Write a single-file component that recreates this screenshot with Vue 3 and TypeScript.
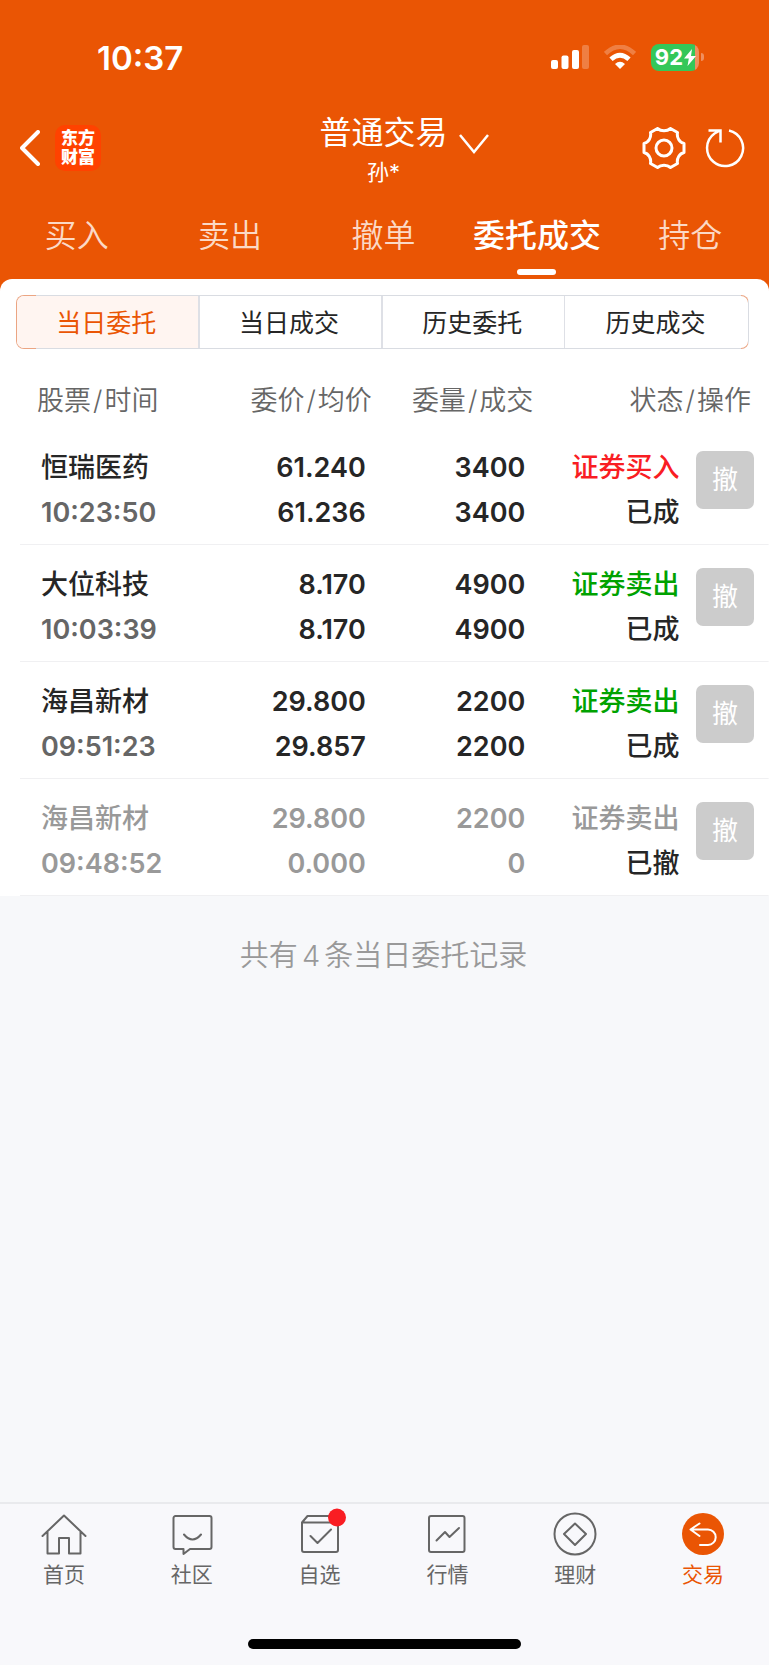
<script setup lang="ts">
import { ref } from 'vue'

interface Order {
  name: string
  time: string
  price: string
  average: string
  amount: string
  filled: string
  side: string
  tone: 'buy' | 'sell' | 'void'
  state: string
}

const tabs = ['买入', '卖出', '撤单', '委托成交', '持仓']
const activeTab = ref(3)

const segments = ['当日委托', '当日成交', '历史委托', '历史成交']
const activeSegment = ref(0)

const orders: Order[] = [
  { name: '恒瑞医药', time: '10:23:50', price: '61.240', average: '61.236', amount: '3400', filled: '3400', side: '证券买入', tone: 'buy', state: '已成' },
  { name: '大位科技', time: '10:03:39', price: '8.170', average: '8.170', amount: '4900', filled: '4900', side: '证券卖出', tone: 'sell', state: '已成' },
  { name: '海昌新材', time: '09:51:23', price: '29.800', average: '29.857', amount: '2200', filled: '2200', side: '证券卖出', tone: 'sell', state: '已成' },
  { name: '海昌新材', time: '09:48:52', price: '29.800', average: '0.000', amount: '2200', filled: '0', side: '证券卖出', tone: 'void', state: '已撤' },
]

const navItems = [
  { key: 'home', label: '首页' },
  { key: 'community', label: '社区' },
  { key: 'watchlist', label: '自选' },
  { key: 'market', label: '行情' },
  { key: 'wealth', label: '理财' },
  { key: 'trade', label: '交易' },
]
</script>

<template>
  <div class="screen">
    <header class="top">
      <div class="status">
        <time class="clock">10:37</time>
        <div class="indicators">
          <svg class="signal" viewBox="0 0 38 24" aria-hidden="true">
            <rect x="0" y="15" width="7" height="9" rx="2" />
            <rect x="10.5" y="10.5" width="7" height="13.5" rx="2" />
            <rect x="21" y="5" width="7" height="19" rx="2" />
            <rect x="31" y="0" width="7" height="24" rx="2" opacity=".25" />
          </svg>
          <svg class="wifi" viewBox="0 0 32 24" aria-hidden="true">
            <path d="M1.500 8.500Q16-5 30.500 8.500" fill="none" stroke="#fff" stroke-width="4.5" opacity=".25" />
            <path d="M7 14.300Q16 6 25 14.300" fill="none" stroke="#fff" stroke-width="4.8" />
            <path d="M16 24l-5-5q5-4.500 10 0z" />
          </svg>
          <div class="battery">
            <span class="cell">
              <span>92</span>
              <svg class="bolt" viewBox="0 0 12 17" aria-hidden="true"><path d="M8 0L0 9.500h4.800L3.500 17 12 7H7z" /></svg>
            </span>
            <span class="nub"></span>
          </div>
        </div>
      </div>

      <div class="titlebar">
        <div class="left">
          <button class="plain" type="button" aria-label="返回">
            <svg class="back" viewBox="0 0 20 36" aria-hidden="true"><path d="M18 2L2 18 18 34" /></svg>
          </button>
          <div class="logo"><span>东方</span><span>财富</span></div>
        </div>
        <div class="title">
          <h1>普通交易</h1>
          <p>孙*</p>
        </div>
        <div class="right">
          <button class="plain drop" type="button" aria-label="切换账户">
            <svg class="down" viewBox="0 0 30 20" aria-hidden="true"><path d="M1 1l14 17L29 1" /></svg>
          </button>
          <button class="plain" type="button" aria-label="设置">
            <svg class="gear" viewBox="-22 -21 44 42" aria-hidden="true">
              <path d="M-6.500-19.500C-3-16.500 3-16.500 6.500-19.500L13.500-15.500C12.500-10.500 15.500-5.500 20-4.500V4.500C15.500 5.500 12.500 10.500 13.500 15.500L6.500 19.500C3 16.500-3 16.500-6.500 19.500L-13.500 15.500C-12.500 10.500-15.500 5.500-20 4.500V-4.500C-15.500-5.500-12.500-10.500-13.500-15.500Z" />
              <circle r="8" />
            </svg>
          </button>
          <button class="plain" type="button" aria-label="刷新">
            <svg class="reload" viewBox="0 0 40 40" aria-hidden="true">
              <path d="M24 2.500A18 18 0 1 1 9.500 5.500L15 2.500M3.500 2.500H15.500V14.500" />
            </svg>
          </button>
        </div>
      </div>

      <nav class="tabs" aria-label="交易功能">
        <button
          v-for="(tab, i) in tabs"
          :key="tab"
          type="button"
          :class="{ active: i === activeTab }"
          @click="activeTab = i"
        >{{ tab }}</button>
      </nav>
    </header>

    <main class="panel">
      <div class="segments">
        <button
          v-for="(segment, i) in segments"
          :key="segment"
          type="button"
          :class="{ active: i === activeSegment }"
          @click="activeSegment = i"
        >{{ segment }}</button>
      </div>

      <table class="orders">
        <colgroup>
          <col class="c-stock"><col class="c-price"><col class="c-amount"><col class="c-side"><col>
        </colgroup>
        <thead>
          <tr>
            <th>股票<i>/</i>时间</th>
            <th>委价<i>/</i>均价</th>
            <th>委量<i>/</i>成交</th>
            <th colspan="2">状态<i>/</i>操作</th>
          </tr>
        </thead>
        <tbody>
          <tr v-for="order in orders" :key="order.time" :class="order.tone">
            <td class="stock"><div>{{ order.name }}</div><div class="time">{{ order.time }}</div></td>
            <td class="price"><div>{{ order.price }}</div><div>{{ order.average }}</div></td>
            <td class="amount"><div>{{ order.amount }}</div><div>{{ order.filled }}</div></td>
            <td class="status-cell"><div class="side">{{ order.side }}</div><div class="state">{{ order.state }}</div></td>
            <td class="action"><button type="button">撤</button></td>
          </tr>
        </tbody>
      </table>
    </main>

    <p class="summary">共有<span>{{ orders.length }}</span>条当日委托记录</p>

    <footer class="bottom">
      <nav class="nav" aria-label="主导航">
        <a v-for="item in navItems" :key="item.key" href="#" :class="{ current: item.key === 'trade' }">
          <svg viewBox="0 0 44 44" aria-hidden="true">
            <template v-if="item.key === 'home'">
              <path d="M.5 24L22 3.500 43.500 24M5.500 20v21.500H17V26h10v15.500h11.500V20" />
            </template>
            <template v-else-if="item.key === 'community'">
              <path d="M5.500 4h34a2 2 0 0 1 2 2v29a2 2 0 0 1-2 2H20l-6.500 5v-5h-8a2 2 0 0 1-2-2V6a2 2 0 0 1 2-2zM14 22.500q8.500 10 17 0" />
            </template>
            <template v-else-if="item.key === 'watchlist'">
              <path d="M4 10.500h36V38a2 2 0 0 1-2 2H6a2 2 0 0 1-2-2zL9.500 4H38l2 6.500M12.500 24l7 7L33 17.500" />
              <circle class="dot" cx="39" cy="5.5" r="9" />
            </template>
            <template v-else-if="item.key === 'market'">
              <rect x="4" y="4" width="35.5" height="36" rx="2" />
              <path d="M11.500 28.500l8.500-8.500 4.500 5L34 16" />
            </template>
            <template v-else-if="item.key === 'wealth'">
              <circle cx="22" cy="22" r="20.5" />
              <path d="M22 11.500L33 22 22 33 11 22z" />
            </template>
            <template v-else>
              <circle class="disc" cx="22" cy="22" r="21" />
              <path class="arrow" d="M18.500 11.500L9.500 17.500 18.500 24M10 17.500H27a7.700 7.700 0 0 1 0 15.400H19" />
            </template>
          </svg>
          <span>{{ item.label }}</span>
        </a>
      </nav>
      <div class="home-bar"></div>
    </footer>
  </div>
</template>

<style>
body {
  margin: 0;
  background: #f7f8fa;
}
</style>

<style scoped>
.screen {
  display: flex;
  flex-direction: column;
  min-height: 100vh;
  background: #f7f8fa;
  color: #262626;
  font-family: Inter, "Noto Sans CJK SC", sans-serif;
}

button {
  margin: 0;
  padding: 0;
  border: 0;
  background: none;
  color: inherit;
  font: inherit;
}

.plain {
  display: flex;
}

.top {
  padding-bottom: 12px;
  margin-bottom: -12px;
  background: #ea5504;
  color: #fff;
}

.status {
  display: flex;
  align-items: center;
  justify-content: space-between;
  height: 58px;
  padding: 28px 65px 0 97px;
}

.clock {
  padding-top: 2px;
  font-size: 33px;
  font-weight: 600;
  line-height: 40px;
}

.indicators {
  display: flex;
  align-items: center;
  gap: 15px;
}

.signal,
.wifi,
.bolt {
  fill: #fff;
}

.signal {
  width: 38px;
  height: 24px;
}

.wifi {
  width: 32px;
  height: 24px;
}

.battery {
  display: flex;
  align-items: center;
  gap: 2px;
}

.cell {
  display: flex;
  align-items: center;
  gap: 1px;
  height: 27px;
  padding: 0 3px 0 4px;
  border-radius: 8px;
  background: linear-gradient(90deg, #34c759 92%, #f08f5e 92%);
  font-size: 22px;
  font-weight: 700;
  line-height: 27px;
}

.bolt {
  width: 12px;
  height: 17px;
}

.nub {
  width: 3px;
  height: 8px;
  border-radius: 0 3px 3px 0;
  background: #f08f5e;
}

.titlebar {
  display: grid;
  grid-template-columns: 1fr auto 1fr;
  height: 124px;
  padding-right: 2px;
}

.left,
.right {
  display: flex;
  align-items: center;
}

.left {
  gap: 15px;
  padding-left: 20px;
}

.back {
  width: 20px;
  height: 36px;
  fill: none;
  stroke: #fff;
  stroke-width: 4;
  stroke-linecap: round;
  stroke-linejoin: round;
}

.logo {
  display: flex;
  flex-direction: column;
  align-items: center;
  justify-content: center;
  width: 46px;
  height: 46px;
  border-radius: 10px;
  background: #ff4200;
  font-size: 17px;
  font-weight: 900;
  line-height: 19px;
}

.title {
  padding-top: 25px;
  text-align: center;
}

.title h1 {
  margin: 0;
  font-size: 32px;
  font-weight: 400;
  line-height: 44px;
}

.title p {
  margin: 0;
  font-size: 22px;
  line-height: 34px;
}

.right {
  gap: 19px;
  padding-right: 22px;
}

.drop {
  margin: 0 auto 8px 11px;
}

.down {
  width: 30px;
  height: 20px;
}

.gear {
  width: 44px;
  height: 42px;
}

.reload {
  width: 40px;
  height: 40px;
}

.down,
.gear,
.reload {
  fill: none;
  stroke: #fff;
  stroke-width: 2.5;
}

.gear {
  stroke-width: 3;
  stroke-linejoin: round;
}

.tabs {
  display: grid;
  grid-template-columns: repeat(5, 1fr);
  height: 69px;
  padding-right: 2px;
}

.tabs button {
  display: flex;
  flex-direction: column;
  align-items: center;
  font-size: 32px;
  font-weight: 350;
  line-height: 52px;
  white-space: nowrap;
  color: #fbd9c6;
}

.tabs .active {
  color: #fff;
  font-weight: 500;
}

.tabs .active::after {
  content: "";
  width: 39px;
  height: 6px;
  margin-top: 7px;
  border-radius: 3px;
  background: #fff;
}

.panel {
  border-radius: 12px 12px 0 0;
  background: #fff;
}

.segments {
  display: grid;
  grid-template-columns: repeat(4, 1fr);
  height: 52px;
  margin: 16px 20px 0 16px;
  border: 1px solid transparent;
  border-radius: 8px;
  background:
    linear-gradient(#fff, #fff) padding-box,
    linear-gradient(
      90deg,
      #eba583 20px,
      #d9dce2 20px calc(100% - 8px),
      #eba583 calc(100% - 8px) calc(100% - 1px),
      #d9dce2 calc(100% - 1px)
    ) border-box;
  overflow: hidden;
}

.segments button {
  padding: 0 2px 2px 0;
  border-right: 2px solid #dee0e6;
  font-size: 25px;
}

.segments button:nth-child(3) {
  border-right-width: 1px;
}

.segments button:last-child {
  border-right: 0;
}

.segments .active {
  background: #fff5f1;
  color: #ea5504;
}

.orders {
  width: 100%;
  border-collapse: collapse;
  table-layout: fixed;
  font-size: 27px;
  line-height: 45px;
  text-align: right;
  white-space: nowrap;
}

.c-stock {
  width: 25%;
}

.c-price {
  width: 24%;
}

.c-amount {
  width: 21%;
}

.c-side {
  width: 19%;
}

th {
  padding: 29px 5px 5px 0;
  color: #666;
  font-weight: 350;
}

th i {
  margin: 0 2px;
  font-style: normal;
}

th:first-child {
  padding-left: 37px;
  text-align: left;
}

th:last-child {
  padding-right: 18px;
}

tbody tr {
  background: linear-gradient(#f0f0f2, #f0f0f2) right bottom / calc(100% - 20px) 1px no-repeat;
}

td {
  padding: 17px 0 10px;
  font-weight: 500;
}

.stock {
  padding-left: 41px;
  text-align: left;
}

.time {
  color: #666;
}

.price {
  padding-right: 11px;
}

.amount {
  padding-right: 13px;
}

.status-cell {
  padding-right: 5px;
}

.price,
.amount,
.time {
  font-weight: 600;
}

.buy .side {
  color: #f91d23;
}

.sell .side {
  color: #00a200;
}

.void td,
.void .time {
  color: #999;
}

.void .state {
  color: #262626;
}

.action {
  padding-right: 15px;
  vertical-align: top;
}

.action button {
  width: 58px;
  height: 58px;
  margin-top: 6px;
  border-radius: 7px;
  background: #ccc;
  color: #fff;
  font-size: 26px;
  font-weight: 400;
  line-height: 58px;
}

.summary {
  flex: 1;
  margin: 0;
  padding: 38px 2px 0 0;
  color: #999;
  font-size: 29px;
  font-weight: 350;
  line-height: 44px;
  text-align: center;
}

.summary span {
  margin: 0 4px;
}

.bottom {
  border-top: 2px solid #e9eaed;
  background: #f8f8fb;
}

.nav {
  display: grid;
  grid-template-columns: repeat(6, 1fr);
  padding: 8px 2px 0 0;
}

.nav a {
  display: flex;
  flex-direction: column;
  align-items: center;
  color: #666;
  font-size: 21px;
  line-height: 32px;
  text-decoration: none;
}

.nav svg {
  width: 44px;
  height: 44px;
  margin-bottom: 3px;
  overflow: visible;
  fill: none;
  stroke: #666;
  stroke-width: 2;
  stroke-linecap: round;
  stroke-linejoin: round;
}

.nav .dot {
  fill: #f91d23;
  stroke: none;
}

.nav .disc {
  fill: #ea5504;
  stroke: none;
}

.nav .arrow {
  stroke: #fff;
}

.nav .current {
  color: #ea5504;
}

.home-bar {
  width: 273px;
  height: 10px;
  margin: 48px auto 16px;
  border-radius: 5px;
  background: #000;
}
</style>
